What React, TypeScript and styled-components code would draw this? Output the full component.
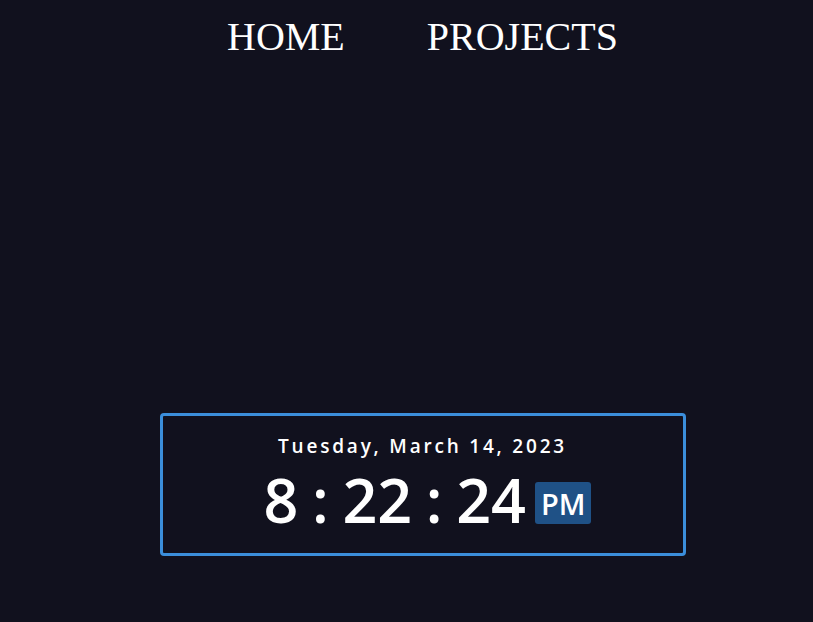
import React from "react";
import styled, { createGlobalStyle } from "styled-components";

const GlobalStyle = createGlobalStyle`
  html, body {
    margin: 0;
    padding: 0;
    background-color: #11111e;
  }
  body {
    min-height: 622px;
  }
`;

const Page = styled.div`
  min-height: 622px;
  padding-left: 32px;
  box-sizing: border-box;
  display: flex;
  flex-direction: column;
  align-items: center;
`;

const Nav = styled.nav`
  display: flex;
  justify-content: center;
  gap: 82px;
  padding-top: 14px;
`;

const NavItem = styled.a`
  font-family: "Liberation Serif", "Times New Roman", serif;
  font-size: 40px;
  color: #ffffff;
  text-decoration: none;
  line-height: 46px;
`;

const Card = styled.div`
  margin-top: 353px;
  width: 526px;
  height: 143px;
  box-sizing: border-box;
  border: 3px solid #3b8edb;
  border-radius: 4px;
  display: flex;
  flex-direction: column;
  align-items: center;
  font-family: "Open Sans", "Noto Sans", sans-serif;
  color: #ffffff;
`;

const DateLine = styled.div`
  margin-top: 18px;
  font-size: 19px;
  font-weight: 600;
  letter-spacing: 2.8px;
  line-height: 24px;
`;

const TimeRow = styled.div`
  display: flex;
  align-items: center;
  margin-top: 8px;
  padding-left: 10px;
`;

const Time = styled.span`
  font-size: 61px;
  font-weight: 600;
  line-height: 68px;
  word-spacing: -2.2px;
`;

const Meridiem = styled.span`
  margin-left: 9px;
  margin-top: 6px;
  background-color: #1f5186;
  border-radius: 3px;
  padding: 0 6px;
  height: 42px;
  display: flex;
  align-items: center;
  font-size: 29px;
  font-weight: 600;
`;

export default function App() {
  return (
    <>
      <GlobalStyle />
      <Page>
        <Nav>
          <NavItem href="#">HOME</NavItem>
          <NavItem href="#">PROJECTS</NavItem>
        </Nav>
        <Card>
          <DateLine>Tuesday, March 14, 2023</DateLine>
          <TimeRow>
            <Time>8 : 22 : 24</Time>
            <Meridiem>PM</Meridiem>
          </TimeRow>
        </Card>
      </Page>
    </>
  );
}
